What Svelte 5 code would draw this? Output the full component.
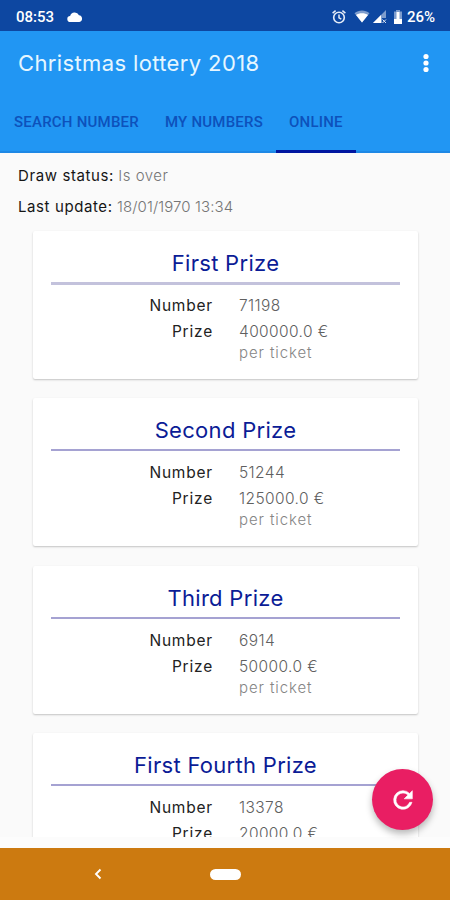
<script>
  const tabs = ['Search number', 'My numbers', 'Online'];
  let active = $state(2);

  const prizes = [
    { name: 'First Prize', number: '71198', amount: '400000.0 €' },
    { name: 'Second Prize', number: '51244', amount: '125000.0 €' },
    { name: 'Third Prize', number: '6914', amount: '50000.0 €' },
    { name: 'First Fourth Prize', number: '13378', amount: '20000.0 €' }
  ];
</script>

<div class="screen">
  <div class="status-bar">
    <span class="clock">08:53</span>
    <svg class="cloud" width="16" height="12" viewBox="0 0 16 12">
      <path d="M3.5 11a3 3 0 0 1-.4-6A4.8 4.8 0 0 1 12 4.300a3.400 3.400 0 0 1 .4 6.700z" fill="#fff" />
    </svg>
    <div class="system">
      <svg class="alarm" width="16" height="16" viewBox="0 0 16 16" fill="none" stroke="#e6edf8">
        <circle cx="8" cy="8.500" r="5.300" stroke-width="1.600" />
        <path d="M1.600 4.200l3-2.500M14.400 4.200l-3-2.500M8 5.500v3.300l2.300 1.400" stroke-width="1.500" />
      </svg>
      <svg class="wifi" width="16" height="13" viewBox="0 0 16 13">
        <path d="M8 12.500L.5 3.200C4.800-.3 11.200-.3 15.500 3.200z" fill="#7e9dcd" />
        <path d="M8 12.500L2 5C5 2.700 11 2.700 14 5z" fill="#fff" />
      </svg>
      <svg class="signal" width="15" height="14" viewBox="0 0 15 14">
        <path d="M1 13L14 0v8h-4v5z" fill="#7e9dcd" />
        <path d="M1 13l8-8v8z" fill="#fff" />
        <path d="M10.500 9.500l3.500 3.500M14 9.500L10.500 13" stroke="#dce6f5" />
      </svg>
      <svg class="battery" width="10" height="14" viewBox="0 0 10 14">
        <path d="M3 0h4v1.500h2V14H1V1.500h2z" fill="#7e9dcd" />
        <path d="M3.500 2h3v7H9v5H1V9h2.500z" fill="#fff" />
      </svg>
      <span class="percent">26%</span>
    </div>
  </div>

  <header>
    <div class="toolbar">
      <h1>Christmas lottery 2018</h1>
      <button class="more" aria-label="More options">
        <svg width="6" height="20" viewBox="0 0 6 20" fill="#fff">
          <circle cx="3" cy="3.500" r="2.600" />
          <circle cx="3" cy="10" r="2.600" />
          <circle cx="3" cy="16.500" r="2.600" />
        </svg>
      </button>
    </div>
    <nav>
      {#each tabs as tab, i}
        <button class="tab" class:active={active === i} onclick={() => (active = i)}>{tab}</button>
      {/each}
    </nav>
  </header>

  <main>
    <p><b>Draw status:</b> <span class="state">Is over</span></p>
    <p><b>Last update:</b> <span>18/01/1970 13:34</span></p>
    <div class="list">
      {#each prizes as prize}
        <section class="card">
          <h2>{prize.name}</h2>
          <dl>
            <dt>Number</dt>
            <dd>{prize.number}</dd>
            <dt>Prize</dt>
            <dd>{prize.amount}<small>per ticket</small></dd>
          </dl>
        </section>
      {/each}
    </div>
  </main>

  <button class="fab" aria-label="Refresh">
    <svg width="28" height="28" viewBox="0 0 24 24" fill="#fff">
      <path d="M17.650 6.350A7.960 7.960 0 0 0 12 4a8 8 0 1 0 7.730 10h-2.080A6 6 0 1 1 12 6c1.660 0 3.140.69 4.220 1.780L13 11h7V4z" stroke="#fff" stroke-width=".5" />
    </svg>
  </button>

  <footer>
    <svg class="back" width="8" height="12" viewBox="0 0 8 12">
      <path d="M6.500 1.500L2 6l4.500 4.500" fill="none" stroke="#fff" stroke-width="1.900" />
    </svg>
    <span class="home"></span>
  </footer>
</div>

<style>
.screen {
  position: relative;
  display: flex;
  flex-direction: column;
  width: 450px;
  height: 900px;
  overflow: hidden;
  background: #fcfcfc;
  font-family: Inter, "Open Sans", sans-serif;
}

button {
  border: 0;
  padding: 0;
  background: none;
}

svg {
  display: block;
}

.status-bar {
  display: flex;
  align-items: center;
  flex: 0 0 31px;
  box-sizing: border-box;
  padding: 2px 15px 0 16px;
  background: #0d47a1;
  color: #fff;
  font: 500 15px Roboto, sans-serif;
}

.cloud {
  margin-left: 13px;
}

.system {
  display: flex;
  align-items: center;
  margin-left: auto;
}

.wifi {
  margin-left: 7px;
}

.signal {
  margin-left: 2px;
}

.battery {
  margin: 0 4px 0 6px;
}

header {
  flex: 0 0 122px;
  background: #2196f3;
  box-shadow: inset 0 -2px #1e88e5;
}

.toolbar {
  display: flex;
  align-items: center;
  justify-content: space-between;
  height: 63px;
  padding: 0 21px 0 18px;
}

h1 {
  margin: 0;
  color: #e6f6ff;
  font-size: 22px;
  font-weight: 400;
  letter-spacing: 0.37px;
}

nav {
  display: flex;
  height: 59px;
  padding-left: 1px;
}

.tab {
  box-sizing: border-box;
  height: 59px;
  padding: 0 13px 1px;
  border-bottom: 3px solid transparent;
  color: #0d51bb;
  font: 500 15px Roboto, sans-serif;
  letter-spacing: 0.22px;
  text-transform: uppercase;
}

.tab.active {
  border-color: #0016a0;
}

main {
  flex: 0 0 684px;
  box-sizing: border-box;
  overflow: hidden;
  padding-top: 7px;
  background: #fafafa;
  color: #757575;
}

p {
  margin: 0 18px;
  font-size: 15px;
  font-weight: 300;
  line-height: 31px;
  letter-spacing: 0.1px;
}

b {
  color: #151515;
  font-weight: 400;
  letter-spacing: 0.6px;
}

.state {
  letter-spacing: 0.5px;
}

.list {
  display: flex;
  flex-direction: column;
  gap: 19.300px;
  padding: 9px 32px 0 33px;
}

.card {
  box-sizing: border-box;
  flex: 0 0 148px;
  padding: 18px 18px 0;
  border-radius: 2px;
  background: #fff;
  box-shadow: 0 1px 2px rgba(0, 0, 0, 0.22);
}

h2 {
  margin: 0;
  padding-bottom: 4px;
  border-bottom: 2px solid #a5a2d2;
  color: #0b1c96;
  font-size: 22px;
  font-weight: 400;
  line-height: 29px;
  letter-spacing: 0.3px;
  text-align: center;
}

.card:first-child h2 {
  border-bottom: 3px solid #c3c2dc;
  margin-bottom: -1px;
}

dl {
  display: grid;
  grid-template-columns: 162px 1fr;
  column-gap: 26px;
  margin: 9px 0 0;
  font-size: 15.500px;
  line-height: 26px;
}

dt {
  color: #222;
  letter-spacing: 0.8px;
  text-align: right;
}

dd {
  margin: 0;
  color: #606060;
  font-weight: 300;
  letter-spacing: 0.4px;
}

small {
  display: block;
  margin-top: -2px;
  color: #858585;
  font-size: 15px;
  line-height: 20px;
  letter-spacing: 0.9px;
}

/* floats over the list */
.fab {
  position: absolute;
  right: 17px;
  bottom: 70px;
  display: grid;
  place-items: center;
  width: 61px;
  height: 61px;
  border-radius: 50%;
  background: #e91e63;
  box-shadow: 0 4px 7px rgba(0, 0, 0, 0.28);
}

footer {
  display: flex;
  align-items: center;
  flex: 0 0 52px;
  margin-top: auto;
  background: #cc7a10;
}

.back {
  margin-left: 94px;
}

.home {
  width: 31px;
  height: 11px;
  margin-left: 108px;
  border-radius: 6px;
  background: #fff;
}
</style>
